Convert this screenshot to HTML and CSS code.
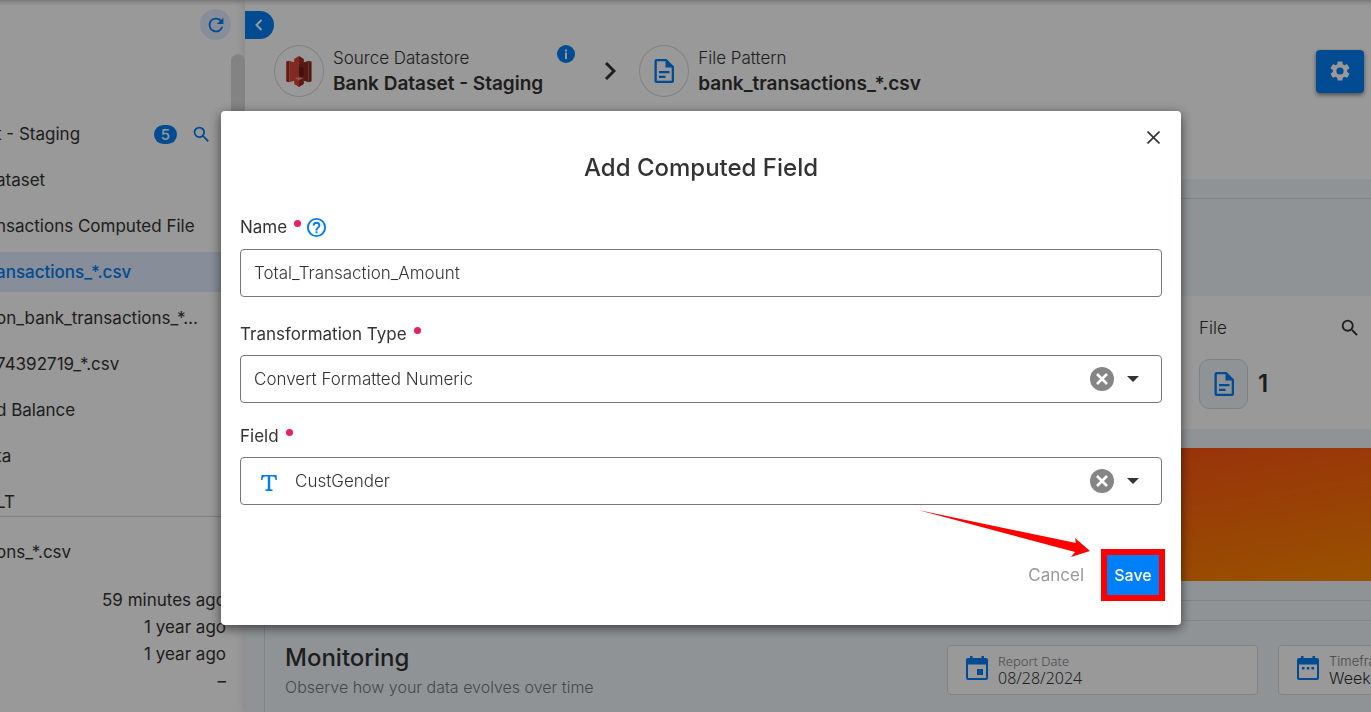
FILE: index.html
```html
<!DOCTYPE html>
<html lang="en">
<head>
<meta charset="utf-8">
<title>Add Computed Field</title>
<link rel="stylesheet" href="styles.css">
</head>
<body>
<svg class="defs" aria-hidden="true">
  <symbol id="i-search" viewBox="0 0 24 24"><path d="M15.5 14h-.79l-.28-.27A6.47 6.47 0 0 0 16 9.5 6.5 6.5 0 1 0 9.5 16c1.61 0 3.09-.59 4.23-1.57l.27.28v.79l5 4.99L20.49 19l-4.99-5zm-6 0C7.01 14 5 11.99 5 9.500S7.010 5 9.500 5 14 7.010 14 9.500 11.990 14 9.500 14z"/></symbol>
  <symbol id="i-doc" viewBox="0 0 24 24"><path fill-rule="evenodd" d="M4.500 0H14.500L22 7.500V22a2 2 0 0 1-2 2H4.500a2 2 0 0 1-2-2V2a2 2 0 0 1 2-2zM4.800 2.300V21.700H19.700V8.500H13.500V2.300zM7 12h10.500v2.300H7zM7 16.800h6.500v2.300H7z"/></symbol>
  <symbol id="i-clear" viewBox="0 0 24 24"><circle cx="12" cy="12" r="12"/><path d="M7 7l10 10M17 7L7 17" stroke="#fff" stroke-width="2.600" fill="none"/></symbol>
  <symbol id="i-caret" viewBox="0 0 12 6"><path d="M0 0h12L6 6z"/></symbol>
</svg>

<div class="app">
  <aside class="sidebar">
    <div class="sidebar-top">
      <button class="refresh" aria-label="Refresh"><svg viewBox="0 0 24 24"><path d="M17.650 6.350A7.960 7.960 0 0 0 12 4a8 8 0 1 0 7.730 10h-2.080A6 6 0 1 1 12 6c1.660 0 3.140.690 4.220 1.780L13 11h7V4z"/></svg></button>
    </div>
    <nav class="tree">
      <a class="node" href="#">t - Staging <span class="count">5</span><svg class="node-search"><use href="#i-search"/></svg></a>
      <a class="node" href="#">ataset</a>
      <a class="node" href="#">nsactions Computed File</a>
      <a class="node active" href="#">ansactions_*.csv</a>
      <a class="node" href="#">on_bank_transactions_*…</a>
      <a class="node" href="#">74392719_*.csv</a>
      <a class="node" href="#">d Balance</a>
      <a class="node" href="#">ta</a>
      <a class="node" href="#">LT</a>
    </nav>
    <div class="details">
      <p class="details-name">ons_*.csv</p>
      <ul class="details-list">
        <li>59 minutes ago</li>
        <li>1 year ago</li>
        <li>1 year ago</li>
        <li>–</li>
      </ul>
    </div>
    <span class="thumb"></span>
  </aside>

  <main class="main">
    <header class="header">
      <button class="collapse" aria-label="Collapse"><svg viewBox="0 0 12 12"><path d="M8.500 1L3.500 6l5 5" fill="none" stroke="currentColor" stroke-width="2"/></svg></button>
      <div class="crumbs">
        <span class="avatar">
          <svg class="s3" viewBox="0 0 28 32"><path fill="#8c2a21" d="M1 6l3-1v22l-3-1zM27 6l-3-1v22l3-1z"/><path fill="#dc4537" d="M4 5l10 3v16L4 27z"/><path fill="#b0352a" d="M3 5l-2 1v20l2 1z"/><path fill="#8c2a21" d="M24 5L14 8v16l10 3z"/><path fill="#d94436" d="M9 3l5-3v8l-5 1z"/><path fill="#9b2c23" d="M19 3l-5-3v8l5 1z"/><path fill="#db4436" d="M9 12l5-1v10l-5-1z"/><path fill="#6f1e17" d="M19 12l-5-1v10l5-1z"/><path fill="#f0897c" d="M9 23l5-1 5 1-5 2z"/><path fill="#d94436" d="M9 23l5 2v7l-5-3z"/><path fill="#9b2c23" d="M19 23l-5 2v7l5-3z"/></svg>
        </span>
        <div class="crumb">
          <span class="crumb-kind">Source Datastore</span>
          <strong class="crumb-name">Bank Dataset - Staging</strong>
        </div>
        <svg class="info" viewBox="0 0 18 18"><circle cx="9" cy="9" r="9"/><path fill="#fff" d="M8 7.500h2V14H8zM8 4.500h2v2H8z"/></svg>
        <svg class="next" viewBox="0 0 12 20"><path d="M2 2l8 8-8 8" fill="none" stroke="#333" stroke-width="3"/></svg>
        <span class="avatar"><svg class="doc"><use href="#i-doc"/></svg></span>
        <div class="crumb">
          <span class="crumb-kind">File Pattern</span>
          <strong class="crumb-name">bank_transactions_*.csv</strong>
        </div>
        <button class="gear" aria-label="Settings"><svg viewBox="2 2 20 20"><path d="M19.140 12.940c.040-.300.060-.610.060-.940 0-.320-.020-.640-.070-.940l2.030-1.580a.490.490 0 0 0 .120-.610l-1.920-3.320a.490.490 0 0 0-.590-.220l-2.390.960a7.030 7.030 0 0 0-1.620-.940l-.360-2.540A.480.480 0 0 0 13.920 2.400h-3.840c-.240 0-.430.170-.470.410l-.360 2.540c-.590.240-1.130.570-1.620.940l-2.390-.960a.490.490 0 0 0-.590.220L2.740 8.870c-.120.210-.080.470.120.610l2.030 1.580c-.050.300-.090.630-.090.940s.020.640.070.940l-2.030 1.580a.490.490 0 0 0-.120.610l1.920 3.320c.120.220.370.290.590.220l2.390-.960c.500.380 1.030.700 1.620.940l.360 2.540c.050.240.240.410.480.410h3.840c.240 0 .440-.170.470-.410l.360-2.540c.590-.240 1.130-.560 1.620-.940l2.390.960c.220.080.470 0 .590-.220l1.920-3.320a.490.490 0 0 0-.120-.610zM12 15.600A3.600 3.600 0 1 1 12 8.400a3.600 3.600 0 0 1 0 7.200z"/></svg></button>
      </div>
    </header>

    <div class="canvas">
      <section class="card summary">
        <div class="panel">
          <div class="stat">
            <div class="stat-head"><span>File</span><svg><use href="#i-search"/></svg></div>
            <div class="stat-body"><span class="tile"><svg class="doc"><use href="#i-doc"/></svg></span><strong>1</strong></div>
          </div>
        </div>
        <div class="banner"></div>
      </section>
      <section class="card monitoring">
        <div>
          <h2>Monitoring</h2>
          <p>Observe how your data evolves over time</p>
        </div>
        <div class="filters">
          <button class="filter system">
            <svg viewBox="0 0 22 24"><path fill-rule="evenodd" d="M4 0h2.500v2h9V0H18v2h2a2 2 0 0 1 2 2v18a2 2 0 0 1-2 2H2a2 2 0 0 1-2-2V4a2 2 0 0 1 2-2h2zM2 8.500V22h18V8.500zM11 13h6v6h-6z"/></svg>
            <span class="filter-text"><small>Report Date</small><span>08/28/2024</span></span>
          </button>
          <button class="filter">
            <svg viewBox="0 0 22 24"><path fill-rule="evenodd" d="M4 0h2.500v2h9V0H18v2h2a2 2 0 0 1 2 2v18a2 2 0 0 1-2 2H2a2 2 0 0 1-2-2V4a2 2 0 0 1 2-2h2zM2 8.500V22h18V8.500zM5 11h2.500v2.500H5zM9.800 11h2.500v2.500H9.800zM14.500 11H17v2.500h-2.500z"/></svg>
            <span class="filter-text"><small>Timeframe</small><span>Week</span></span>
          </button>
        </div>
      </section>
    </div>
  </main>
</div>

<div class="overlay">
  <form class="dialog" role="dialog" aria-labelledby="dialog-title">
    <div class="dialog-top">
      <button type="button" class="close" aria-label="Close"><svg viewBox="0 0 12 12"><path d="M0.500 0.500l11 11M11.500 0.500l-11 11" stroke="#333" stroke-width="1.500"/></svg></button>
    </div>
    <h1 id="dialog-title">Add Computed Field</h1>

    <div class="group text-group">
      <div class="label-row">
        <label for="name">Name</label><i class="dot"></i>
        <svg class="help" viewBox="0 0 24 24"><path d="M11 18h2v-2h-2v2zm1-16a10 10 0 1 0 0 20 10 10 0 0 0 0-20zm0 18a8 8 0 1 1 0-16 8 8 0 0 1 0 16zm0-14a4 4 0 0 0-4 4h2a2 2 0 1 1 4 0c0 2-3 1.750-3 5h2c0-2.250 3-2.500 3-5a4 4 0 0 0-4-4z"/></svg>
      </div>
      <div class="control"><input id="name" type="text" value="Total_Transaction_Amount"></div>
    </div>

    <div class="group">
      <div class="label-row"><label for="type">Transformation Type</label><i class="dot"></i></div>
      <div class="control">
        <select id="type"><option>Convert Formatted Numeric</option></select>
        <button type="button" class="clear" aria-label="Clear type"><svg><use href="#i-clear"/></svg></button>
        <svg class="caret"><use href="#i-caret"/></svg>
      </div>
    </div>

    <div class="group">
      <div class="label-row"><label for="field">Field</label><i class="dot"></i></div>
      <div class="control">
        <svg class="type-icon" viewBox="0 0 16 16"><path d="M0.500 0h15l.5 5h-1.500C14.200 2.500 13.500 1.600 11.500 1.600H9.200v11.500c0 1.200.5 1.500 2.300 1.500V16h-7v-1.400c1.800 0 2.300-.3 2.300-1.500V1.600H4.500C2.500 1.600 1.800 2.500 1.500 5H0z"/></svg>
        <select id="field"><option>CustGender</option></select>
        <button type="button" class="clear" aria-label="Clear field"><svg><use href="#i-clear"/></svg></button>
        <svg class="caret"><use href="#i-caret"/></svg>
      </div>
    </div>

    <div class="actions">
      <button type="button" class="cancel">Cancel</button>
      <span class="highlight"><button type="button" class="save">Save</button>
        <svg class="arrow" viewBox="0 0 172 48"><path d="M0 0L158 33 157 28 172 41 153 47 157 42z"/></svg>
      </span>
    </div>
  </form>
</div>
</body>
</html>
```
FILE: styles.css
```css
* { box-sizing: border-box; }
body {
  margin: 0;
  overflow: hidden;
  font: 400 17px/24px Inter, "Noto Sans", sans-serif;
  color: #333;
}
button, input, select { font: inherit; color: inherit; border: 0; background: none; padding: 0; margin: 0; }
h1, h2, p, ul { margin: 0; padding: 0; }
svg { display: block; flex: none; fill: currentColor; }
.defs { position: absolute; width: 0; height: 0; }

.app { display: flex; height: 100vh; overflow: hidden; box-shadow: inset 0 7px 5px -5px rgba(0,0,0,.25); }

.sidebar {
  position: relative;
  z-index: 1;
  display: flex;
  flex-direction: column;
  flex: 0 0 245px;
  overflow: hidden;
}
.sidebar-top { display: flex; justify-content: flex-end; padding: 9px 14px 0 0; height: 114px; flex: none; }
.refresh { width: 31px; height: 31px; border-radius: 50%; background: #e1ecff; color: #007df3; display: grid; place-items: center; }
.refresh svg { width: 22px; height: 22px; }
.tree { flex: none; height: 402px; overflow: hidden; display: flex; flex-direction: column; gap: 6px; }
.node {
  flex: none;
  display: flex;
  align-items: center;
  height: 40px;
  margin-left: -4px;
  padding-right: 33px;
  white-space: nowrap;
  color: inherit;
  text-decoration: none;
}
.node.active { background: #e1ecff; color: #007df3; font-weight: 500; }
.count {
  margin-left: auto;
  width: 23px;
  height: 19px;
  border-radius: 10px;
  background: #007df3;
  color: #fff;
  font-weight: 500;
  font-size: 15px;
  line-height: 19px;
  text-align: center;
}
.node-search { width: 21px; height: 21px; margin-left: 14px; color: #007df3; }
.details { border-top: 1px solid #d0d0d0; padding: 23px 19px 0 0; flex: 1; }
.details-name { margin: 0 0 23px -4px; }
.details-list { list-style: none; text-align: right; line-height: 27px; }
.thumb { position: absolute; top: 54px; right: 0; width: 14px; height: 180px; border-radius: 7px; background: #dadada; }

.main { flex: 1; min-width: 0; overflow: hidden; background: #eef6fb; box-shadow: 0 0 10px rgba(0,0,0,.15); }
.header { height: 179px; background: #fff; padding-top: 11px; box-shadow: inset 0 7px 5px -5px rgba(0,0,0,.25); }
.collapse { width: 29px; height: 28px; border-radius: 0 14px 14px 0; background: #007df3; color: #fff; display: flex; align-items: center; padding-left: 8px; }
.collapse svg { width: 12px; height: 12px; }
.crumbs { display: flex; align-items: center; padding: 6px 7px 0 29px; }
.avatar { width: 50px; height: 52px; border: 1px solid #d8d8d8; border-radius: 50%; display: grid; place-items: center; color: #007df3; flex: none; }
.s3 { width: 28px; height: 31px; }
.doc { width: 24px; height: 24px; color: #007df3; }
.crumb { margin-left: 9px; display: flex; flex-direction: column; white-space: nowrap; }
.crumb-kind { font-weight: 300; line-height: 26px; }
.crumb-name { font-size: 19px; font-weight: 600; line-height: 26px; }
.info { width: 18px; height: 18px; align-self: flex-start; margin: 0 29px 0 14px; color: #007df3; }
.next { width: 12px; height: 20px; margin-right: 23px; }
.gear { margin-left: auto; width: 48px; height: 43px; border-radius: 4px; background: #007df3; color: #fff; display: grid; place-items: center; box-shadow: 0 2px 4px rgba(0,0,0,.5); }
.gear svg { width: 20px; height: 20px; }

.canvas { margin: 19px -239px 0 19px; display: flex; flex-direction: column; gap: 19px; }
.card { border: 1px solid #d6dce1; border-radius: 4px; }
.summary { padding: 97px 0 19px 19px; }
.panel { height: 133px; border-radius: 8px; background: #fff; display: flex; padding: 20px 248px 0 0; }
.stat { width: 162px; margin-left: auto; }
.stat-head { display: flex; justify-content: space-between; align-items: center; font-weight: 300; }
.stat-head svg { width: 22px; height: 22px; }
.stat-body { display: flex; align-items: center; gap: 10px; margin-top: 19px; font-size: 24px; }
.stat-body strong { font-weight: 600; }
.tile { width: 49px; height: 50px; border: 1px solid #ccd8e2; border-radius: 10px; background: #eef6fb; display: grid; place-items: center; }
.banner { margin-top: 19px; height: 133px; background: linear-gradient(170deg, #ff5214 40%, #ff8a00 90%); }
.monitoring { height: 180px; padding: 24px 20px; display: flex; justify-content: space-between; }
.monitoring h2 { font-size: 24px; line-height: 26px; font-weight: 500; }
.monitoring p { font-size: 16px; font-weight: 300; color: #777; margin-top: 4px; }
.filters { display: flex; gap: 20px; }
.filter { width: 311px; height: 50px; background: #fff; border: 1px solid #dadada; border-radius: 4px; display: flex; align-items: center; gap: 10px; padding-left: 18px; font-size: 16px; font-weight: 300; text-align: left; line-height: 18px; }
.filter svg { width: 22px; height: 24px; color: #007df3; margin-bottom: 4px; }
.filter-text { display: flex; flex-direction: column; }
.filter small { font-size: 13px; line-height: 16px; color: #777; }
.system { font-family: "Noto Sans", sans-serif; }

.overlay {
  position: fixed;
  inset: 0;
  z-index: 2;
  background: rgba(0,0,0,.4);
  display: flex;
  justify-content: center;
  align-items: flex-start;
  padding: 111px 0 0 31px;
}
.dialog { width: 960px; background: #fff; border-radius: 4px; padding: 20px 19px 24px; box-shadow: 0 3px 12px rgba(0,0,0,.6); }
.dialog-top { display: flex; justify-content: flex-end; padding-right: 2px; }
.close { width: 13px; height: 13px; }
.close svg { width: 13px; height: 13px; }
h1 { font-size: 24px; line-height: 32px; font-weight: 500; text-align: center; margin: 8px 0 31px; }
.group { margin-bottom: 21px; }
.text-group { margin-bottom: 25px; }
.label-row { display: flex; align-items: center; height: 24px; margin-bottom: 9px; }
.text-group .label-row { margin-bottom: 10px; }
.dot { width: 7px; height: 7px; border-radius: 50%; background: #e91e63; margin: 0 4px 8px 7px; }
.help { width: 23px; height: 23px; color: #007df3; }
.control { height: 48px; border: 1px solid #777; border-radius: 4px; display: flex; align-items: center; padding-left: 13px; }
.control input, .control select { flex: 1; min-width: 0; height: 24px; font-weight: 300; appearance: none; outline: 0; }
.type-icon { width: 16px; height: 16px; color: #007df3; margin: 4px 18px 0 7px; }
.clear { color: #858585; }
.clear svg { width: 24px; height: 24px; }
.caret { width: 12px; height: 6px; margin: 0 22px 0 13px; }
.actions { display: flex; justify-content: flex-end; align-items: center; gap: 17px; margin: 44px -3px 0 0; }
.cancel { color: #999; }
.highlight { position: relative; border: 6px solid #f00; background: #f00; }
.save { display: block; width: 52px; height: 40px; background: #0080f8; color: #fff; font-weight: 500; font-size: 16px; }
.arrow { position: absolute; right: 69px; top: -45px; width: 172px; height: 48px; color: #f00; }
```
